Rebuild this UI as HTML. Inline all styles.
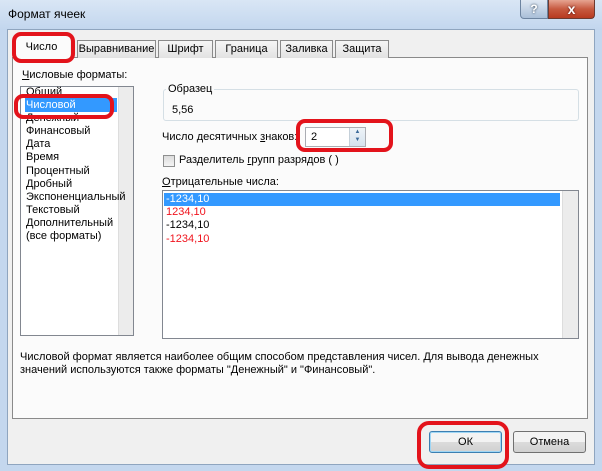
<html><head><style>
body{margin:0;width:602px;height:471px;overflow:hidden;background:#c4d7ee;font-family:"Liberation Sans",sans-serif;font-size:11px;color:#000;position:relative}
div,span{position:absolute;box-sizing:border-box}
.t{white-space:nowrap}
.tab{top:40px;height:18px;border:1px solid #8a8a8a;border-bottom:none;background:linear-gradient(#f6f6f6,#e2e2e2);text-align:center;line-height:16px}
.red{border:4px solid #e3131b;border-radius:9px}
.sb{background:#ececec;border-left:1px solid #ddd}
.btn{border:1px solid #707070;border-radius:3px;background:linear-gradient(#f3f3f3 50%,#dcdcdc 50%,#d0d0d0);text-align:center;line-height:20px}
</style></head><body>
<div style="left:0;top:0;width:602px;height:30px;background:linear-gradient(#d9e6f5,#c2d6ee)"></div>
<div class="t" style="left:8px;top:7px;font-size:12px">Формат ячеек</div>
<div style="left:520px;top:0;width:28px;height:19px;border:1px solid #6d84a0;border-top:none;border-radius:0 0 0 4px;background:linear-gradient(#dfe8f3,#a9bfd8);text-align:center;color:#fff;font-weight:bold;font-size:12px;line-height:18px;text-shadow:0 0 2px #234">?</div>
<div style="left:548px;top:0;width:47px;height:19px;border:1px solid #6d3a30;border-top:none;border-radius:0 0 4px 0;background:linear-gradient(#e6a492,#c75a40 50%,#b83a20);text-align:center;color:#fff;font-weight:bold;font-size:14px;line-height:18px;text-shadow:0 0 2px #400">x</div>
<div style="left:7px;top:29px;width:588px;height:436px;background:#f0f0f0;border:1px solid #8fa5bf"></div>
<div style="left:12px;top:57px;width:576px;height:362px;background:#fbfbfb;border:1px solid #8a8a8a"></div>
<div class="tab" style="left:77px;width:79px">Выравнивание</div>
<div class="tab" style="left:158px;width:55px">Шрифт</div>
<div class="tab" style="left:215px;width:63px">Граница</div>
<div class="tab" style="left:280px;width:53px">Заливка</div>
<div class="tab" style="left:335px;width:54px">Защита</div>
<div style="left:13px;top:36px;width:57px;height:22px;background:#fbfbfb;line-height:22px;text-align:center">Число</div>
<div class="t" style="left:22px;top:69px"><u>Ч</u>исловые форматы:</div>
<div style="left:20px;top:86px;width:114px;height:250px;background:#fff;border:1px solid #828790"></div>
<div class="sb" style="left:118px;top:87px;width:15px;height:248px"></div>
<div style="left:25px;top:98px;width:92px;height:14px;background:#3399ff"></div>
<div class="t" style="left:26px;top:86px;line-height:13.1px">Общий<br><span style="position:static;color:#fff">Числовой</span><br>Денежный<br>Финансовый<br>Дата<br>Время<br>Процентный<br>Дробный<br>Экспоненциальный<br>Текстовый<br>Дополнительный<br>(все форматы)</div>
<div style="left:163px;top:89px;width:416px;height:32px;border:1px solid #d5dfe5;border-radius:3px"></div>
<div class="t" style="left:166px;top:83px;background:#fbfbfb;padding:0 2px">Образец</div>
<div class="t" style="left:172px;top:104px">5,56</div>
<div class="t" style="left:162px;top:131px">Число десятичных <u>з</u>наков:</div>
<div style="left:305px;top:127px;width:61px;height:20px;background:#fff;border:1px solid #abadb3"></div>
<div class="t" style="left:311px;top:131px">2</div>
<div style="left:349px;top:128px;width:16px;height:18px;background:linear-gradient(#eef3f8,#d6e3ee);border-left:1px solid #c5d0d9;font-size:6px;color:#3c6b9a;text-align:center;line-height:8px">▲<br>▼</div>
<div style="left:163px;top:155px;width:12px;height:12px;border:1px solid #8e8f8f;background:linear-gradient(#dcdcdc,#f4f4f4)"></div>
<div class="t" style="left:179px;top:154px">Разделитель <u>г</u>рупп разрядов ( )</div>
<div class="t" style="left:162px;top:176px"><u>О</u>трицательные числа:</div>
<div style="left:162px;top:190px;width:417px;height:149px;background:#fff;border:1px solid #828790"></div>
<div class="sb" style="left:562px;top:191px;width:16px;height:147px"></div>
<div style="left:164px;top:193px;width:396px;height:13px;background:#3399ff"></div>
<div class="t" style="left:166px;top:193px;line-height:13.2px"><span style="position:static;color:#fff">-1234,10</span><br><span style="position:static;color:#f0141e">1234,10</span><br>-1234,10<br><span style="position:static;color:#f0141e">-1234,10</span></div>
<div class="t" style="left:20px;top:351px;line-height:13px">Числовой формат является наиболее общим способом представления чисел. Для вывода денежных<br>значений используются также форматы "Денежный" и "Финансовый".</div>
<div class="btn" style="left:429px;top:431px;width:73px;height:22px;border-color:#3c7fb1;box-shadow:inset 0 0 0 1px #9fd6f5">ОК</div>
<div class="btn" style="left:513px;top:431px;width:73px;height:22px">Отмена</div>
<div class="red" style="left:12px;top:32px;width:63px;height:31px"></div>
<div class="red" style="left:14px;top:94px;width:100px;height:25px"></div>
<div class="red" style="left:296px;top:119px;width:97px;height:33px"></div>
<div class="red" style="left:417px;top:421px;width:92px;height:48px;border-radius:12px"></div>
</body></html>
